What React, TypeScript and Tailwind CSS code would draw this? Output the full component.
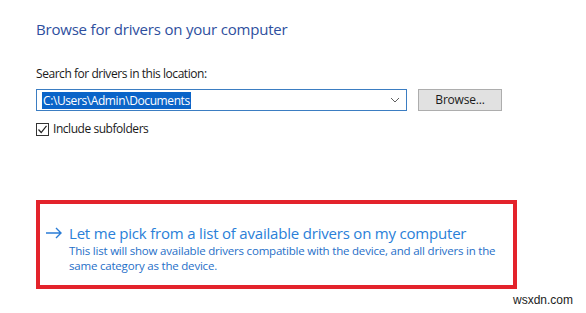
import React from 'react';

const font = { fontFamily: '"Open Sans", "Noto Sans", sans-serif' };

export default function App() {
  return (
    <div
      className="w-[586px] h-[313px] bg-white relative overflow-hidden pl-[36px] pt-[19px] text-[#1a1a1a]"
      style={font}
    >
      <h1 className="text-[15px] leading-[20px] text-[#2e4f9e] tracking-[-0.2px]">
        Browse for drivers on your computer
      </h1>

      <div className="mt-[27px] text-[12px] leading-[16px] tracking-[-0.45px]">
        Search for drivers in this location:
      </div>

      <div className="flex items-center mt-[7px]">
        <div className="w-[371px] h-[22px] border border-[#3b7dc2] flex items-center pl-[5px] pr-[6px]">
          <span className="bg-[#0a64c8] text-white text-[12px] leading-[17px] px-[1px] tracking-[-0.4px]">
            C:\Users\Admin\Documents
          </span>
          <svg className="ml-auto" width="10" height="6" viewBox="0 0 10 6">
            <path d="M1 1 L5 5 L9 1" fill="none" stroke="#606060" strokeWidth="1" />
          </svg>
        </div>
        <button className="ml-[11px] w-[84px] h-[22px] bg-[#e1e1e1] border border-[#adadad] text-[12px] leading-[16px] tracking-[-0.2px]">
          Browse...
        </button>
      </div>

      <label className="flex items-center mt-[10px] text-[12px] leading-[16px] tracking-[-0.45px]">
        <span className="w-[13px] h-[13px] border border-[#333] flex items-center justify-center mr-[4px]">
          <svg width="11" height="11" viewBox="0 0 11 11">
            <path d="M1.5 5.5 L4.2 8.5 L9.5 1.8" fill="none" stroke="#222" strokeWidth="1.2" />
          </svg>
        </span>
        Include subfolders
      </label>

      <div className="mt-[63px] w-[481px] h-[89px] border-4 border-[#e3232b] pl-[5px] pt-[19px]">
        <div className="flex items-center">
          <svg width="18" height="12" viewBox="0 0 18 12">
            <path d="M1 6 H16 M11 1 L16 6 L11 11" fill="none" stroke="#2a7cd6" strokeWidth="1.4" />
          </svg>
          <span className="ml-[6px] text-[15px] leading-[20px] text-[#2a80d8] tracking-[-0.2px]">
            Let me pick from a list of available drivers on my computer
          </span>
        </div>
        <p className="ml-[24px] text-[11.5px] leading-[15px] text-[#1f6fc8] tracking-[-0.2px]">
          This list will show available drivers compatible with the device, and all drivers in the
          <br />
          same category as the device.
        </p>
      </div>

      <div className="ml-[477px] mt-[4px] text-[12px] leading-[14px] text-[#222]" style={{ fontFamily: '"Liberation Sans", sans-serif' }}>
        wsxdn.com
      </div>
    </div>
  );
}
